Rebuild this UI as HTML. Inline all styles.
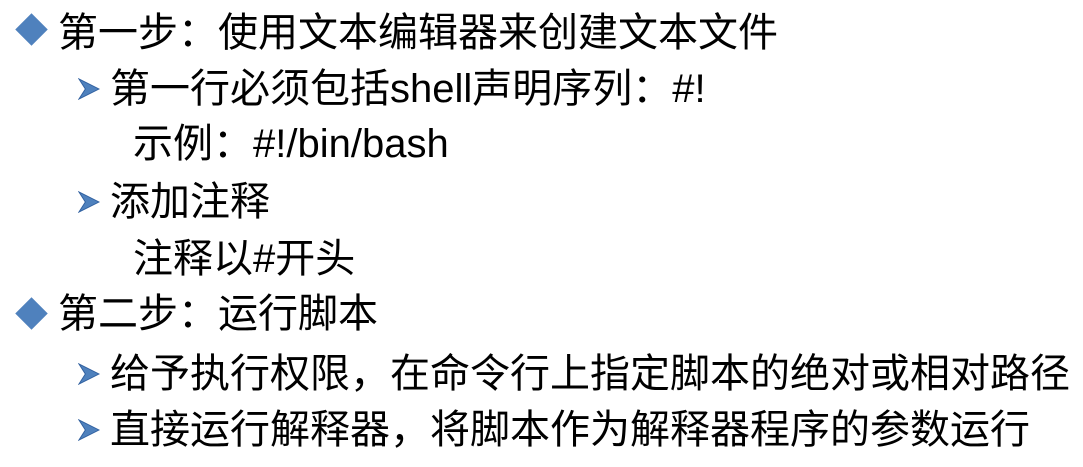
<!DOCTYPE html>
<html><head><meta charset="utf-8"><style>
body{margin:0;width:1083px;height:467px;background:#fff;position:relative;overflow:hidden;font-family:"Liberation Sans","Noto Sans CJK SC",sans-serif;color:#000}
.l{position:absolute;white-space:nowrap;line-height:1;}
.t{left:58px;font-size:40px}
.s{left:110px;font-size:40px}
.ss{left:133px;font-size:40px}
.d{position:absolute;left:20px;width:23px;height:23px;background:#4f81bd;transform:rotate(45deg)}
svg.a{position:absolute;left:78px;width:22px;height:22px}
</style></head><body>
<div class="d" style="top:18px"></div>
<div class="l t" style="top:13px">第一步：使用文本编辑器来创建文本文件</div>
<svg class="a" style="top:78px" viewBox="0 0 24 24"><path d="M1 1 L23 12 L1 23 L8 12 Z" fill="#4f81bd" stroke="#2f5f9f" stroke-width="1"/></svg>
<div class="l s" style="top:69px">第一行必须包括shell声明序列：#!</div>
<div class="l ss" style="top:124px">示例：#!/bin/bash</div>
<svg class="a" style="top:191px" viewBox="0 0 24 24"><path d="M1 1 L23 12 L1 23 L8 12 Z" fill="#4f81bd" stroke="#2f5f9f" stroke-width="1"/></svg>
<div class="l s" style="top:182px">添加注释</div>
<div class="l ss" style="top:239px">注释以#开头</div>
<div class="d" style="top:302px"></div>
<div class="l t" style="top:294px">第二步：运行脚本</div>
<svg class="a" style="top:363px" viewBox="0 0 24 24"><path d="M1 1 L23 12 L1 23 L8 12 Z" fill="#4f81bd" stroke="#2f5f9f" stroke-width="1"/></svg>
<div class="l s" style="top:354px">给予执行权限，在命令行上指定脚本的绝对或相对路径</div>
<svg class="a" style="top:419px" viewBox="0 0 24 24"><path d="M1 1 L23 12 L1 23 L8 12 Z" fill="#4f81bd" stroke="#2f5f9f" stroke-width="1"/></svg>
<div class="l s" style="top:410px">直接运行解释器，将脚本作为解释器程序的参数运行</div>
</body></html>
